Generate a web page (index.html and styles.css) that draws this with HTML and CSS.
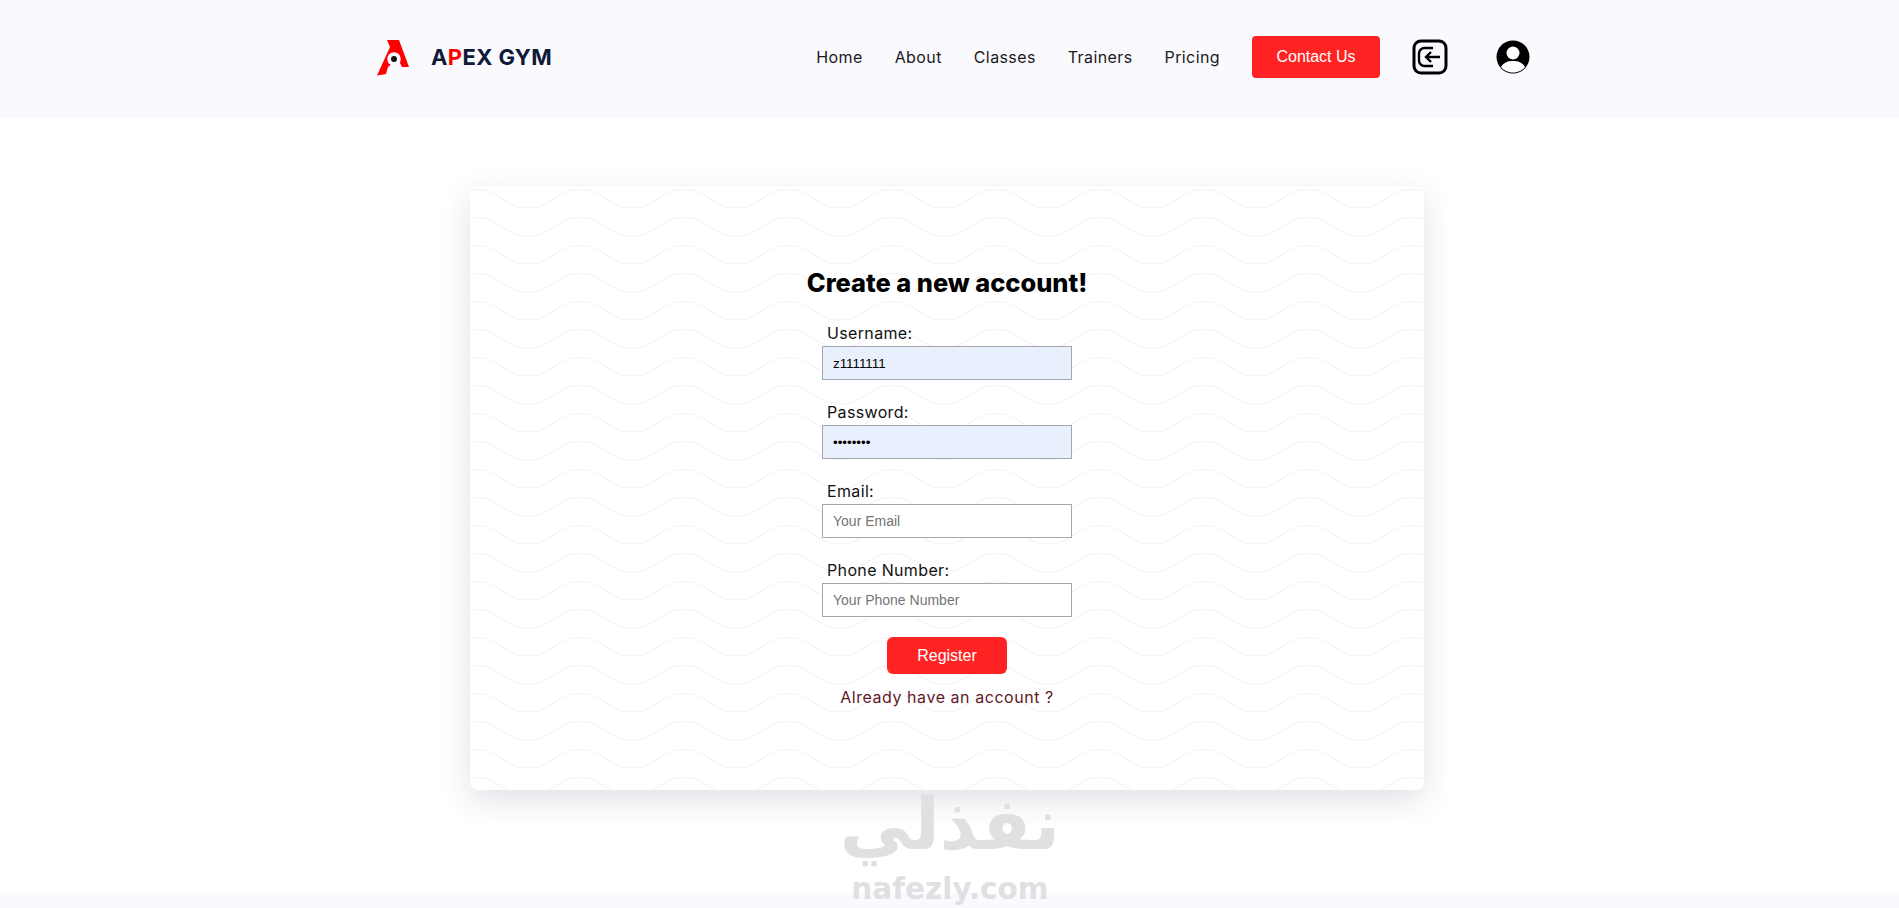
FILE: index.html
```html
<!DOCTYPE html>
<html lang="en">
<head>
  <meta charset="UTF-8" />
  <title>Apex Gym - Register</title>
  <link rel="stylesheet" href="styles.css">
</head>
<body>

  <!-- Header -->
  <header>
    <a class="logo" href="#">
      <svg class="logo-mark" width="34" height="37" viewBox="0 0 34 37">
        <path d="M11 1H23L33 28H26L22 20L12 28L10 35L1 36.5L14 8Z" fill="#fe0000"/>
        <circle cx="18" cy="20" r="6.8" fill="#faf9fe"/>
        <circle cx="18" cy="20" r="3" fill="#111"/>
      </svg>
      <span class="logo-text">A<span class="logo-red">P</span>EX GYM</span>
    </a>
    <nav>
      <a href="#">Home</a>
      <a href="#">About</a>
      <a href="#">Classes</a>
      <a href="#">Trainers</a>
      <a href="#">Pricing</a>
      <button class="btn contact-btn" type="button">Contact Us</button>
      <svg class="login-icon" width="36" height="36" viewBox="0 0 36 36" fill="none" stroke="#000">
        <rect x="2" y="2" width="32" height="32" rx="7" stroke-width="3"/>
        <path d="M21 9H12.5A5.5 5.5 0 0 0 7 14.5V21.5A5.5 5.5 0 0 0 12.5 27H21" stroke-width="2.4"/>
        <path d="M28 18H14M19 13L14 18L19 23" stroke-width="2.4"/>
      </svg>
      <svg class="user-icon" width="34" height="34" viewBox="0 0 34 34">
        <circle cx="17" cy="17" r="16.5" fill="#000"/>
        <circle cx="17" cy="13" r="6.5" fill="#fff"/>
        <path d="M5 27C8 22 12 21 17 21S26 22 29 27C26 31 21 32.5 17 32.5S8 31 5 27Z" fill="#fff"/>
      </svg>
    </nav>
  </header>

  <main>
    <section class="card">
      <svg class="waves" width="100%" height="100%">
        <defs>
          <pattern id="wave" width="104" height="28" patternUnits="userSpaceOnUse">
            <path d="M-98 3.5C-72 3.5 -72 22 -46 22S-20 3.5 6 3.5S32 22 58 22S84 3.5 110 3.5" fill="none" stroke="#f7f5f9" stroke-width="1.6"/>
          </pattern>
        </defs>
        <rect width="100%" height="100%" fill="url(#wave)"/>
      </svg>

      <form class="register-form">
        <h2>Create a new account!</h2>
        <label>Username:</label>
        <input class="filled" type="text" value="z1111111" />
        <label>Password:</label>
        <input class="filled" type="password" value="11111111" />
        <label>Email:</label>
        <input type="text" placeholder="Your Email" />
        <label>Phone Number:</label>
        <input type="text" placeholder="Your Phone Number" />
        <button class="btn register-btn" type="button">Register</button>
        <a class="login-link" href="#">Already have an account ?</a>
      </form>
    </section>
  </main>

  <footer></footer>

  <!-- watermark -->
  <div class="watermark">
    <span class="wm-ar" lang="ar" dir="rtl">نفذلي</span>
    <span class="wm-en">nafezly.com</span>
  </div>

</body>
</html>
```

FILE: styles.css
```css
* { margin: 0; padding: 0; box-sizing: border-box; }
body { font-family: Inter, "Open Sans", sans-serif; background: #fff; color: #000; height: 908px; overflow: hidden; position: relative; }
a { text-decoration: none; color: inherit; }

header {
  height: 118px;
  background-color: #faf9fe;
  display: flex;
  align-items: center;
  justify-content: space-between;
  padding: 0 369px 4px 376px;
}

.logo { display: flex; align-items: center; gap: 21px; }
.logo-text { font-size: 22px; font-weight: 700; color: #0e1a38; letter-spacing: 0.4px; }
.logo-red { color: #fe0000; }

nav { display: flex; align-items: center; gap: 32px; font-size: 16px; letter-spacing: 0.4px; color: #1a1a1a; }

.btn {
  border: none;
  background-color: #ff2323;
  color: #fff;
  font-family: "Liberation Sans", Arial, sans-serif;
  font-size: 16px;
  border-radius: 4px;
}
.contact-btn { width: 128px; height: 42px; letter-spacing: 0; }
.user-icon { margin-left: 16px; }

main { height: 775px; padding: 68px 0 0 470px; }

.card {
  position: relative;
  width: 954px;
  height: 604px;
  background: #fff;
  border-radius: 8px;
  overflow: hidden;
  box-shadow: 0 10px 30px rgba(60, 50, 90, 0.15);
}

.waves { position: absolute; top: 0; left: 0; }

.register-form {
  position: relative;
  width: 250px;
  margin-left: 352px;
  padding-top: 81px;
  display: flex;
  flex-direction: column;
  align-items: flex-start;
}
.register-form h2 {
  align-self: center;
  font-size: 25.4px;
  font-weight: 800;
  line-height: 32px;
  white-space: nowrap;
  margin-bottom: 22px;
}
.register-form label {
  height: 25px;
  line-height: 24px;
  font-size: 16px;
  letter-spacing: 0.35px;
  padding-left: 5px;
  color: #111;
}
.register-form input {
  width: 250px;
  height: 34px;
  border: 1px solid #a3a6ad;
  background: #fff;
  padding: 0 10px;
  font-family: "Liberation Sans", Arial, sans-serif;
  font-size: 13.33px;
  color: #000;
  margin-bottom: 20px;
}
.register-form input.filled { background: #e8f0fe; }
.register-form input::placeholder { color: #757575; font-size: 14px; }

.register-btn { align-self: center; width: 120px; height: 37px; border-radius: 6px; }
.login-link { align-self: center; margin-top: 11px; font-size: 16px; letter-spacing: 0.55px; color: #5f1a1f; line-height: 24px; }

footer { height: 15px; background-color: #faf9fe; }

.watermark {
  position: absolute;
  left: 830px;
  top: 780px;
  width: 240px;
  display: flex;
  flex-direction: column;
  align-items: center;
  color: #e0e0e3;
  pointer-events: none;
}
.wm-ar { font-family: "DejaVu Sans", sans-serif; font-weight: 700; font-size: 72px; line-height: 88px; }
.wm-en { font-family: "DejaVu Sans", sans-serif; font-weight: 700; font-size: 29.5px; line-height: 36px; margin-top: 3px; }
```
